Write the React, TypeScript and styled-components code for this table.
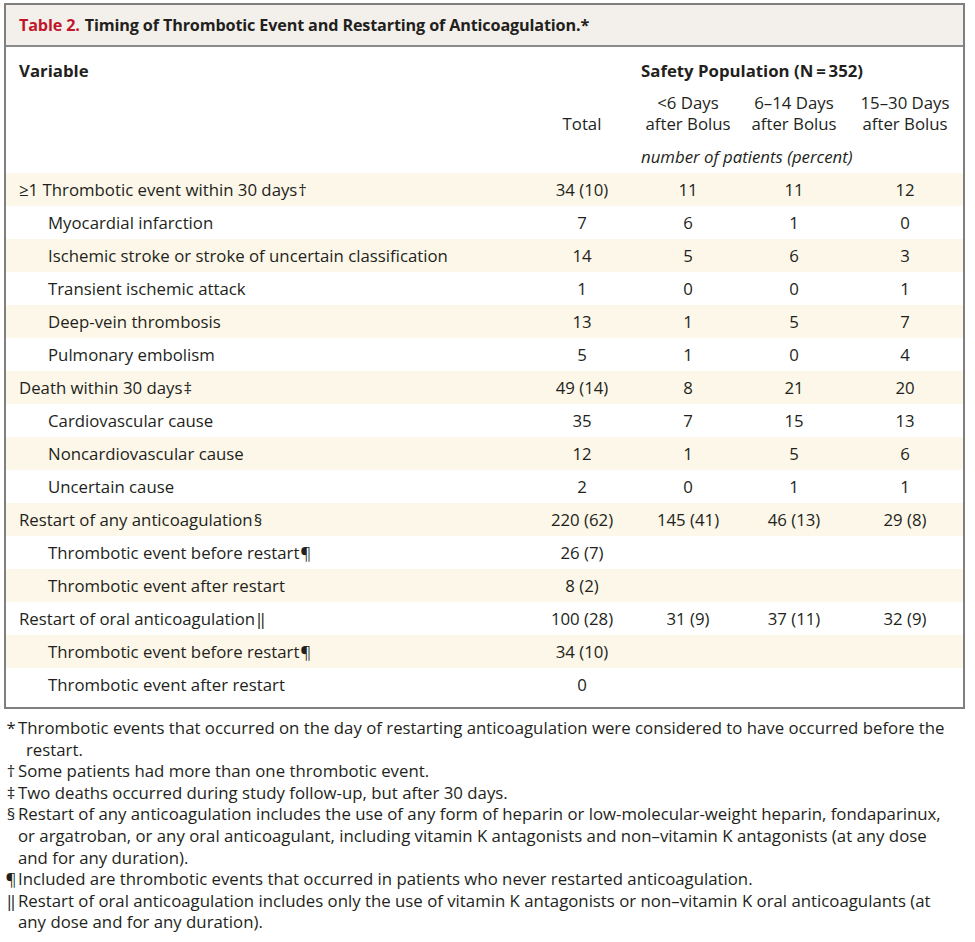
import React from "react";
import styled, { createGlobalStyle } from "styled-components";

const GlobalStyle = createGlobalStyle`
  body {
    margin: 0;
    background: #ffffff;
    color: #231f20;
    font-family: "Open Sans", "Noto Sans", sans-serif;
    font-size: 16.8px;
  }
`;

const COLUMNS = "523px 106px 106px 106px 1fr";

const Page = styled.div`
  width: 975px;
  padding: 3px 0 0 4px;
  box-sizing: border-box;
`;

const Frame = styled.section`
  width: 961px;
  box-sizing: border-box;
  border: 2px solid #7f7f7f;
`;

const TitleBar = styled.header`
  height: 40px;
  display: flex;
  align-items: center;
  padding-left: 13px;
  background: #f3f0eb;
  border-bottom: 2px solid #8a8a8a;
  font-size: 16.2px;
  font-weight: 700;
  letter-spacing: -0.15px;
  color: #231f20;
`;

const TableNo = styled.span`
  color: #c0172d;
  margin-right: 5px;
`;

const HeadGrid = styled.div`
  display: grid;
  grid-template-columns: ${COLUMNS};
  grid-template-rows: 22px 42px 22px;
  row-gap: 11px;
  padding: 12px 0 6px;
  line-height: 21px;
`;

const HeadCell = styled.div<{ $col: string; $row: number; $align?: "left" | "center"; $bold?: boolean; $italic?: boolean }>`
  grid-column: ${(p) => p.$col};
  grid-row: ${(p) => p.$row};
  text-align: ${(p) => p.$align ?? "center"};
  align-self: end;
  padding-left: ${(p) => (p.$align === "left" ? "13px" : "0")};
  font-weight: ${(p) => (p.$bold ? 700 : 400)};
  font-style: ${(p) => (p.$italic ? "italic" : "normal")};
  white-space: nowrap;
`;

const SpanCell = styled(HeadCell)`
  padding-left: 6px;
`;

const Body = styled.div`
  padding-bottom: 6px;
`;

const Row = styled.div<{ $shaded: boolean }>`
  display: grid;
  grid-template-columns: ${COLUMNS};
  height: 33px;
  align-items: center;
  background: ${(p) => (p.$shaded ? "#fdf7e9" : "#ffffff")};
`;

const Label = styled.div<{ $indent: boolean }>`
  padding-left: ${(p) => (p.$indent ? "42px" : "13px")};
  white-space: nowrap;
`;

const Value = styled.div`
  text-align: center;
  white-space: nowrap;
`;

const Mark = styled.span`
  margin-left: 1px;
`;

const Notes = styled.div`
  margin-top: 8px;
  line-height: 21.6px;
`;

const Note = styled.div`
  display: grid;
  grid-template-columns: 14px 1fr;
`;

const Sym = styled.span`
  text-align: center;
`;

const NoteLine = styled.span<{ $shift?: boolean }>`
  display: block;
  white-space: nowrap;
  padding-left: ${(p) => (p.$shift ? "8px" : "0")};
`;

type DataRow = {
  label: string;
  mark?: string;
  values: string[];
  indent: boolean;
};

const rows: DataRow[] = [
  { label: "≥1 Thrombotic event within 30 days", mark: "†", values: ["34 (10)", "11", "11", "12"], indent: false },
  { label: "Myocardial infarction", values: ["7", "6", "1", "0"], indent: true },
  { label: "Ischemic stroke or stroke of uncertain classification", values: ["14", "5", "6", "3"], indent: true },
  { label: "Transient ischemic attack", values: ["1", "0", "0", "1"], indent: true },
  { label: "Deep-vein thrombosis", values: ["13", "1", "5", "7"], indent: true },
  { label: "Pulmonary embolism", values: ["5", "1", "0", "4"], indent: true },
  { label: "Death within 30 days", mark: "‡", values: ["49 (14)", "8", "21", "20"], indent: false },
  { label: "Cardiovascular cause", values: ["35", "7", "15", "13"], indent: true },
  { label: "Noncardiovascular cause", values: ["12", "1", "5", "6"], indent: true },
  { label: "Uncertain cause", values: ["2", "0", "1", "1"], indent: true },
  { label: "Restart of any anticoagulation", mark: "§", values: ["220 (62)", "145 (41)", "46 (13)", "29 (8)"], indent: false },
  { label: "Thrombotic event before restart", mark: "¶", values: ["26 (7)", "", "", ""], indent: true },
  { label: "Thrombotic event after restart", values: ["8 (2)", "", "", ""], indent: true },
  { label: "Restart of oral anticoagulation", mark: "‖", values: ["100 (28)", "31 (9)", "37 (11)", "32 (9)"], indent: false },
  { label: "Thrombotic event before restart", mark: "¶", values: ["34 (10)", "", "", ""], indent: true },
  { label: "Thrombotic event after restart", values: ["0", "", "", ""], indent: true },
];

const notes: { sym: string; lines: string[] }[] = [
  {
    sym: "*",
    lines: [
      "Thrombotic events that occurred on the day of restarting anticoagulation were considered to have occurred before the",
      "restart.",
    ],
  },
  { sym: "†", lines: ["Some patients had more than one thrombotic event."] },
  { sym: "‡", lines: ["Two deaths occurred during study follow-up, but after 30 days."] },
  {
    sym: "§",
    lines: [
      "Restart of any anticoagulation includes the use of any form of heparin or low-molecular-weight heparin, fondaparinux,",
      "or argatroban, or any oral anticoagulant, including vitamin K antagonists and non–vitamin K antagonists (at any dose",
      "and for any duration).",
    ],
  },
  { sym: "¶", lines: ["Included are thrombotic events that occurred in patients who never restarted anticoagulation."] },
  {
    sym: "‖",
    lines: [
      "Restart of oral anticoagulation includes only the use of vitamin K antagonists or non–vitamin K oral anticoagulants (at",
      "any dose and for any duration).",
    ],
  },
];

export default function App() {
  return (
    <Page>
      <GlobalStyle />
      <Frame>
        <TitleBar>
          <TableNo>Table 2.</TableNo>
          Timing of Thrombotic Event and Restarting of Anticoagulation.*
        </TitleBar>
        <HeadGrid>
          <HeadCell $col="1" $row={1} $align="left" $bold>
            Variable
          </HeadCell>
          <SpanCell $col="3 / span 3" $row={1} $align="left" $bold>
            Safety Population (N{"\u2009"}={"\u2009"}352)
          </SpanCell>
          <HeadCell $col="2" $row={2}>
            Total
          </HeadCell>
          <HeadCell $col="3" $row={2}>
            &lt;6 Days
            <br />
            after Bolus
          </HeadCell>
          <HeadCell $col="4" $row={2}>
            6–14 Days
            <br />
            after Bolus
          </HeadCell>
          <HeadCell $col="5" $row={2}>
            15–30 Days
            <br />
            after Bolus
          </HeadCell>
          <SpanCell $col="3 / span 3" $row={3} $align="left" $italic>
            number of patients (percent)
          </SpanCell>
        </HeadGrid>
        <Body>
          {rows.map((r, i) => (
            <Row key={i} $shaded={i % 2 === 0}>
              <Label $indent={r.indent}>
                {r.label}
                {r.mark && <Mark>{r.mark}</Mark>}
              </Label>
              {r.values.map((v, j) => (
                <Value key={j}>{v}</Value>
              ))}
            </Row>
          ))}
        </Body>
      </Frame>
      <Notes>
        {notes.map((n) => (
          <Note key={n.sym}>
            <Sym>{n.sym}</Sym>
            <div>
              {n.lines.map((l, k) => (
                <NoteLine key={l} $shift={n.sym === "*" && k > 0}>
                  {l}
                </NoteLine>
              ))}
            </div>
          </Note>
        ))}
      </Notes>
    </Page>
  );
}
